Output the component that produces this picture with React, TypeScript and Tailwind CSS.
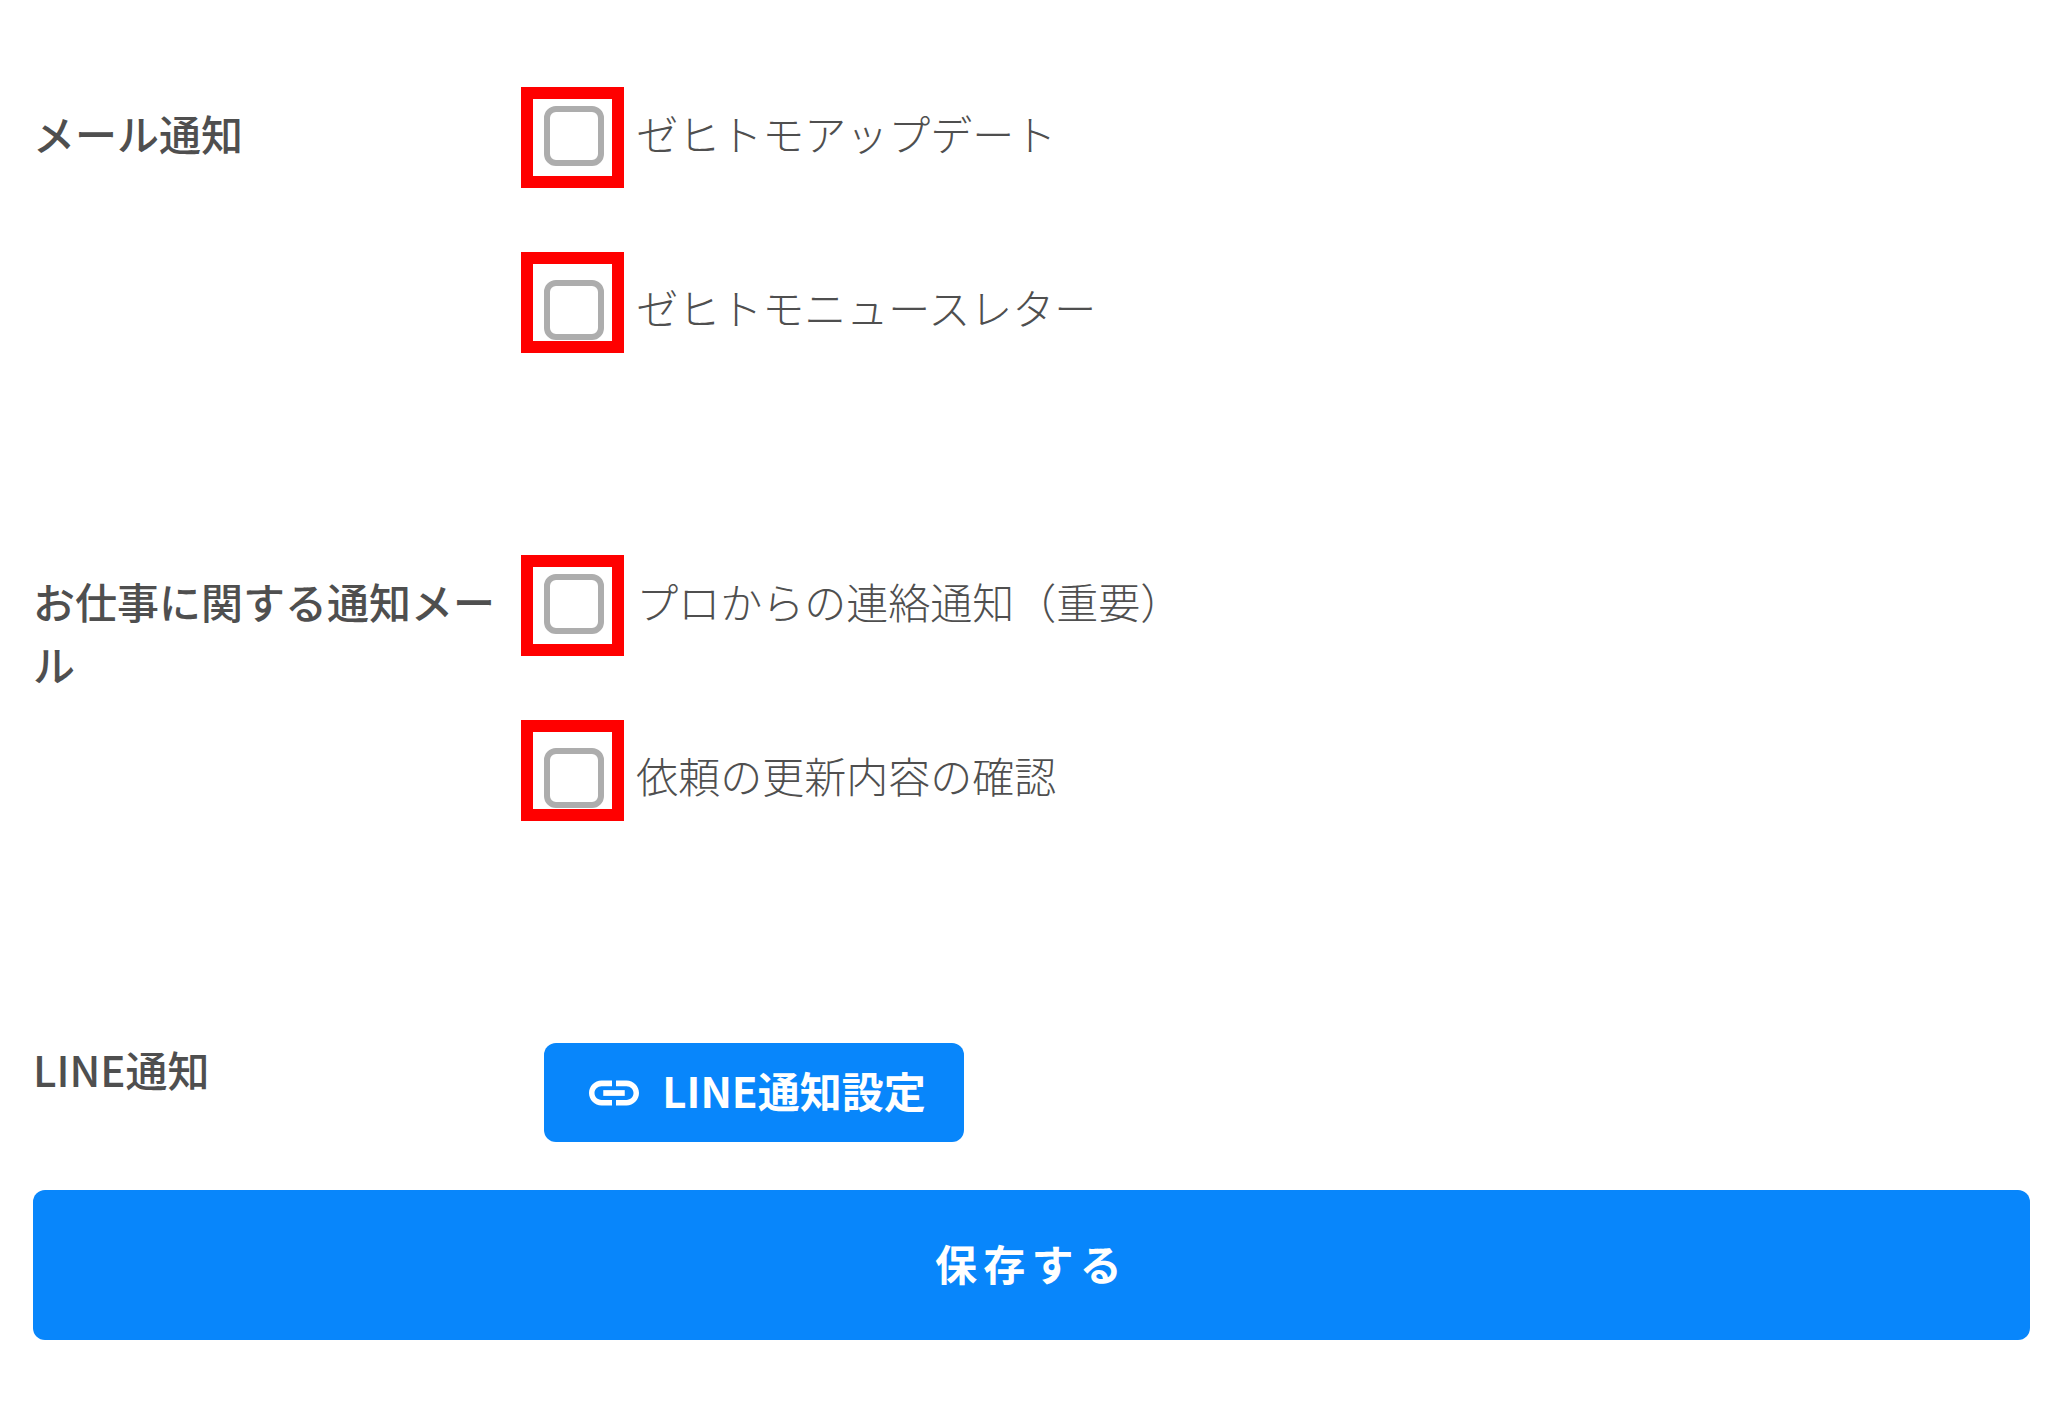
/**
 * Notification Settings
 *
 * Mail and LINE notification preferences with a save button.
 */

import React, { useState } from 'react';

interface Option {
  id: string;
  label: string;
}

interface OptionSectionProps {
  title: string;
  options: Option[];
  values: Record<string, boolean>;
  onToggle: (id: string) => void;
}

const mailOptions: Option[] = [
  { id: 'update', label: 'ゼヒトモアップデート' },
  { id: 'newsletter', label: 'ゼヒトモニュースレター' },
];

const jobOptions: Option[] = [
  { id: 'contact', label: 'プロからの連絡通知（重要）' },
  { id: 'request', label: '依頼の更新内容の確認' },
];

const LinkIcon: React.FC = () => (
  <svg viewBox="0 0 24 24" fill="currentColor" className="size-[60px] shrink-0" aria-hidden="true">
    <path d="M4.2 12c0-1.55 1.25-2.75 2.8-2.75h4.2V7H7c-2.76 0-5 2.24-5 5s2.24 5 5 5h4.2v-2.25H7c-1.55 0-2.8-1.2-2.8-2.75z" />
    <path d="M7.7 10.85h8.6v2.3H7.7z" />
    <path d="M17 7h-4.2v2.25H17c1.55 0 2.8 1.2 2.8 2.75s-1.25 2.75-2.8 2.75h-4.2V17H17c2.76 0 5-2.24 5-5s-2.24-5-5-5z" />
  </svg>
);

const OptionSection: React.FC<OptionSectionProps> = ({ title, options, values, onToggle }) => {
  return (
    <section className="flex mb-[120px]">
      <h2 className="w-1/4 shrink-0 pt-[52px] font-medium">{title}</h2>

      <div className="relative flex-1 pl-3">
        {options.map((option) => (
          <div key={option.id} className="flex h-[174px] items-center">
            <input
              id={option.id}
              type="checkbox"
              checked={values[option.id] ?? false}
              onChange={() => onToggle(option.id)}
              className="appearance-none shrink-0 size-[60px] rounded-xl border-[6px] border-[#adadad] bg-white checked:bg-[#0886fb]"
            />
            <label htmlFor={option.id} className="pb-2 pl-8 font-light">
              {option.label}
            </label>
          </div>
        ))}

        {/* Red frames over the checkboxes */}
        <div className="pointer-events-none absolute top-[38px] -left-[11px] flex flex-col gap-16">
          {options.map((option) => (
            <div key={option.id} className="w-[103px] h-[101px] border-[12px] border-[#ff0000]" />
          ))}
        </div>
      </div>
    </section>
  );
};

const App: React.FC = () => {
  const [values, setValues] = useState<Record<string, boolean>>({});

  const toggle = (id: string) => {
    setValues((prev) => ({ ...prev, [id]: !prev[id] }));
  };

  return (
    <form
      className="bg-white pt-[49px] pb-16 pl-[33px] pr-6 font-['Noto_Sans_CJK_JP',sans-serif] text-[42px] leading-[63px] text-[#4f4f4f]"
      onSubmit={(e) => e.preventDefault()}
    >
      <OptionSection title="メール通知" options={mailOptions} values={values} onToggle={toggle} />
      <OptionSection title="お仕事に関する通知メール" options={jobOptions} values={values} onToggle={toggle} />

      <section className="flex">
        <h2 className="w-1/4 shrink-0 pt-[52px] font-medium">LINE通知</h2>
        <div className="flex-1 pt-[58px] pl-3">
          <button
            type="button"
            className="flex h-[99px] items-center gap-[18px] rounded-xl bg-[#0886fb] pr-[38px] pl-10 font-bold text-white"
          >
            <LinkIcon />
            <span className="pb-1.5">LINE通知設定</span>
          </button>
        </div>
      </section>

      <button
        type="submit"
        className="mt-12 h-[150px] w-full rounded-xl bg-[#0886fb] pb-1.5 font-bold tracking-[0.15em] text-white"
      >
        保存する
      </button>
    </form>
  );
};

export default App;
